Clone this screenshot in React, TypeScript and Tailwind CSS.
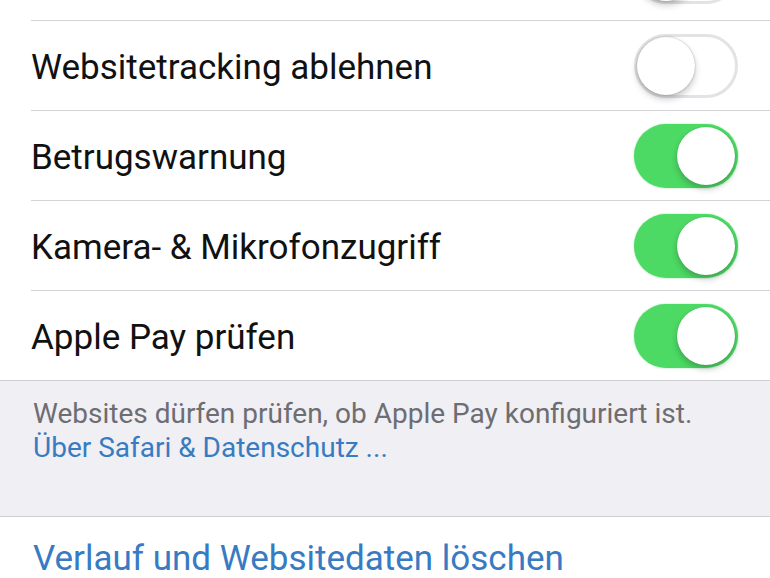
import React from "react";

function Toggle({ on }: { on: boolean }) {
  if (on) {
    return (
      <div className="flex h-[64px] w-[104px] shrink-0 items-center justify-end rounded-full bg-[#4cd964] p-[3px] shadow-[0_0_2px_rgba(76,217,100,0.6)]">
        <div className="h-[58px] w-[58px] rounded-full bg-white shadow-[0_4px_6px_rgba(0,0,0,0.22),0_0_1px_rgba(0,0,0,0.25)]" />
      </div>
    );
  }
  return (
    <div className="flex h-[64px] w-[104px] shrink-0 items-center justify-start rounded-full border-[3px] border-[#e3e3e6] bg-white p-0">
      <div className="h-[58px] w-[58px] rounded-full bg-white shadow-[0_4px_7px_rgba(0,0,0,0.22),0_0_2px_rgba(0,0,0,0.3)]" />
    </div>
  );
}

function Row({ label, on }: { label: string; on: boolean }) {
  return (
    <div className="ml-[31px] flex h-[90px] items-center justify-between border-t border-[#d4d4d8] pr-[32px]">
      <span className="pt-[4px] text-[35px] leading-[41px] text-[#111111]">{label}</span>
      <Toggle on={on} />
    </div>
  );
}

export default function App() {
  return (
    <div
      className="h-[578px] w-[770px] overflow-hidden bg-white"
      style={{ fontFamily: "Roboto, 'Liberation Sans', sans-serif" }}
    >
      <div className="flex h-[20px] items-end justify-end overflow-hidden pr-[32px]">
        <div className="mb-[16px]">
          <Toggle on={false} />
        </div>
      </div>
      <Row label="Websitetracking ablehnen" on={false} />
      <Row label="Betrugswarnung" on={true} />
      <Row label="Kamera- & Mikrofonzugriff" on={true} />
      <Row label="Apple Pay prüfen" on={true} />
      <div className="h-[137px] border-y border-[#cfcfd3] bg-[#efeff4] px-[33px] pt-[16px]">
        <p className="text-[28px] leading-[34px] text-[#6d6d72]">
          Websites dürfen prüfen, ob Apple Pay konfiguriert ist.
        </p>
        <p className="text-[28px] leading-[34px] text-[#387bc2]">Über Safari &amp; Datenschutz ...</p>
      </div>
      <div className="px-[33px] pt-[24px]">
        <p className="text-[35px] leading-[36px] text-[#387bc2]">Verlauf und Websitedaten löschen</p>
      </div>
    </div>
  );
}
